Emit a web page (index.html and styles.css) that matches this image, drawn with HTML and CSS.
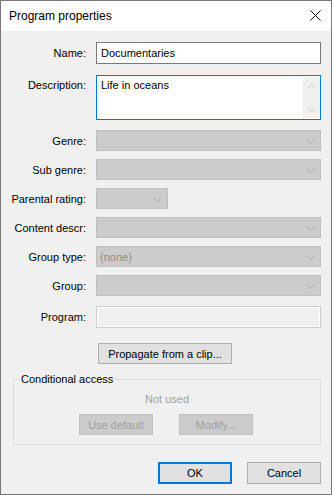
FILE: index.html
```html
<!DOCTYPE html>
<html lang="en">
<head>
    <meta charset="UTF-8">
    <title>Program properties</title>
    <link rel="stylesheet" href="styles.css">
</head>
<body>
    <div class="dialog">
        <div class="titlebar">
            <span class="title">Program properties</span>
            <svg class="close-icon" width="11" height="11" viewBox="0 0 11 11">
                <path d="M0.5 0.5 L10.5 10.5 M10.5 0.5 L0.5 10.5" stroke="#000" stroke-width="1" fill="none"/>
            </svg>
        </div>

        <div class="content">
            <div class="form">
                <div class="row row-name">
                    <span class="label">Name:</span>
                    <div class="edit">Documentaries</div>
                </div>
                <div class="row row-desc">
                    <span class="label">Description:</span>
                    <div class="memo">
                        <span class="memo-text">Life in oceans</span>
                        <div class="memo-scroll">
                            <svg width="9" height="5" viewBox="0 0 9 5"><path d="M0.5 4.5 L4.5 0.5 L8.5 4.5" stroke="#c2c2c2" fill="none"/></svg>
                            <svg width="9" height="5" viewBox="0 0 9 5"><path d="M0.5 0.5 L4.5 4.5 L8.5 0.5" stroke="#c2c2c2" fill="none"/></svg>
                        </div>
                    </div>
                </div>
                <div class="row">
                    <span class="label">Genre:</span>
                    <div class="combo"><span class="combo-text"></span><svg class="chevron" width="9" height="5" viewBox="0 0 9 5"><path d="M0.5 0.5 L4.5 4.5 L8.5 0.5" stroke="#a8a8a8" fill="none"/></svg></div>
                </div>
                <div class="row">
                    <span class="label">Sub genre:</span>
                    <div class="combo"><span class="combo-text"></span><svg class="chevron" width="9" height="5" viewBox="0 0 9 5"><path d="M0.5 0.5 L4.5 4.5 L8.5 0.5" stroke="#a8a8a8" fill="none"/></svg></div>
                </div>
                <div class="row">
                    <span class="label">Parental rating:</span>
                    <div class="combo combo-small"><span class="combo-text"></span><svg class="chevron" width="9" height="5" viewBox="0 0 9 5"><path d="M0.5 0.5 L4.5 4.5 L8.5 0.5" stroke="#a8a8a8" fill="none"/></svg></div>
                </div>
                <div class="row">
                    <span class="label">Content descr:</span>
                    <div class="combo"><span class="combo-text"></span><svg class="chevron" width="9" height="5" viewBox="0 0 9 5"><path d="M0.5 0.5 L4.5 4.5 L8.5 0.5" stroke="#a8a8a8" fill="none"/></svg></div>
                </div>
                <div class="row">
                    <span class="label">Group type:</span>
                    <div class="combo"><span class="combo-text">(none)</span><svg class="chevron" width="9" height="5" viewBox="0 0 9 5"><path d="M0.5 0.5 L4.5 4.5 L8.5 0.5" stroke="#a8a8a8" fill="none"/></svg></div>
                </div>
                <div class="row">
                    <span class="label">Group:</span>
                    <div class="combo"><span class="combo-text"></span><svg class="chevron" width="9" height="5" viewBox="0 0 9 5"><path d="M0.5 0.5 L4.5 4.5 L8.5 0.5" stroke="#a8a8a8" fill="none"/></svg></div>
                </div>
                <div class="row row-program">
                    <span class="label">Program:</span>
                    <div class="edit edit-disabled"></div>
                </div>
            </div>

            <div class="propagate-row">
                <button class="btn btn-propagate">Propagate from a clip...</button>
            </div>

            <fieldset class="groupbox">
                <legend class="groupbox-title">Conditional access</legend>
                <div class="not-used">Not used</div>
                <div class="groupbox-buttons">
                    <button class="btn btn-disabled">Use default</button>
                    <button class="btn btn-disabled">Modify...</button>
                </div>
            </fieldset>

            <div class="footer">
                <button class="btn btn-footer btn-default">OK</button>
                <button class="btn btn-footer">Cancel</button>
            </div>
        </div>
    </div>
</body>
</html>
```

FILE: styles.css
```css
* {
    margin: 0;
    padding: 0;
    box-sizing: border-box;
}

body {
    font-family: 'Segoe UI', 'Liberation Sans', Arial, sans-serif;
    font-size: 11px;
    color: #000;
    background-color: #f0f0f0;
}

.dialog {
    width: 332px;
    height: 495px;
    border: 1px solid #777;
    background-color: #f0f0f0;
    display: flex;
    flex-direction: column;
}

/* Title bar */
.titlebar {
    height: 30px;
    background-color: #fff;
    display: flex;
    align-items: center;
    justify-content: space-between;
    padding: 0 10px 0 8px;
    flex-shrink: 0;
}

.title {
    font-size: 12px;
    line-height: 16px;
}

.close-icon {
    margin-bottom: 2px;
}

.content {
    flex: 1;
    display: flex;
    flex-direction: column;
    padding: 11px 10px 0 0;
}

/* Label + field rows */
.form {
    display: flex;
    flex-direction: column;
    gap: 8px;
}

.row {
    display: flex;
    align-items: center;
    gap: 10px;
}

.row-name {
    margin-bottom: 3px;
}

.row-desc {
    align-items: flex-start;
    margin-bottom: 2px;
}

.row-desc .label {
    line-height: 21px;
}

.row-program {
    margin-top: 2px;
}

.label {
    width: 85px;
    flex-shrink: 0;
    text-align: right;
    white-space: nowrap;
}

.edit {
    flex: 1;
    height: 22px;
    border: 1px solid #7a7a7a;
    background-color: #fff;
    padding: 0 4px;
    line-height: 20px;
}

.edit-disabled {
    height: 22px;
    border-color: #cdcdcd;
    background-color: #f0f0f0;
    box-shadow: inset 0 0 0 1px #fff;
}

.memo {
    flex: 1;
    height: 45px;
    border: 1px solid #0078d7;
    background-color: #fff;
    display: flex;
    justify-content: space-between;
}

.memo-text {
    padding: 3px 4px;
    line-height: 13px;
}

.memo-scroll {
    width: 17px;
    margin: 1px 0;
    background-color: #f0f0f0;
    display: flex;
    flex-direction: column;
    align-items: center;
    justify-content: space-between;
    padding: 7px 0 6px;
}

.combo {
    flex: 1;
    height: 21px;
    background-color: #cccccc;
    border: 1px solid #bfbfbf;
    display: flex;
    align-items: center;
    justify-content: space-between;
    padding: 0 5px 0 3px;
}

.combo-small {
    flex: 0 0 72px;
}

.combo-text {
    color: #8d8d8d;
}

.chevron {
    margin-top: 1px;
}

/* Buttons */
.btn {
    font-family: inherit;
    font-size: 11px;
    color: #000;
    height: 21px;
    background-color: #e1e1e1;
    border: 1px solid #adadad;
}

.propagate-row {
    padding-left: 97px;
    margin-top: 15px;
}

.btn-propagate {
    width: 134px;
}

/* Conditional access group */
.groupbox {
    margin: 9px 0 0 12px;
    border: 1px solid #dcdcdc;
    padding: 0 0 9px;
    min-width: 0;
}

.groupbox-title {
    margin-left: 6px;
    padding: 0 1px;
    line-height: 13px;
}

.not-used {
    text-align: center;
    color: #a0a0a0;
    line-height: 15px;
    margin-top: 6px;
}

.groupbox-buttons {
    display: flex;
    justify-content: center;
    gap: 26px;
    margin-top: 7px;
    padding-right: 2px;
}

.btn-disabled {
    width: 74px;
    background-color: #cccccc;
    border-color: #bfbfbf;
    color: #a0a0a0;
}

/* OK / Cancel */
.footer {
    display: flex;
    justify-content: flex-end;
    gap: 15px;
    margin-top: 17px;
}

.btn-footer {
    width: 74px;
    height: 22px;
}

.btn-default {
    border: 2px solid #0078d7;
}
```
